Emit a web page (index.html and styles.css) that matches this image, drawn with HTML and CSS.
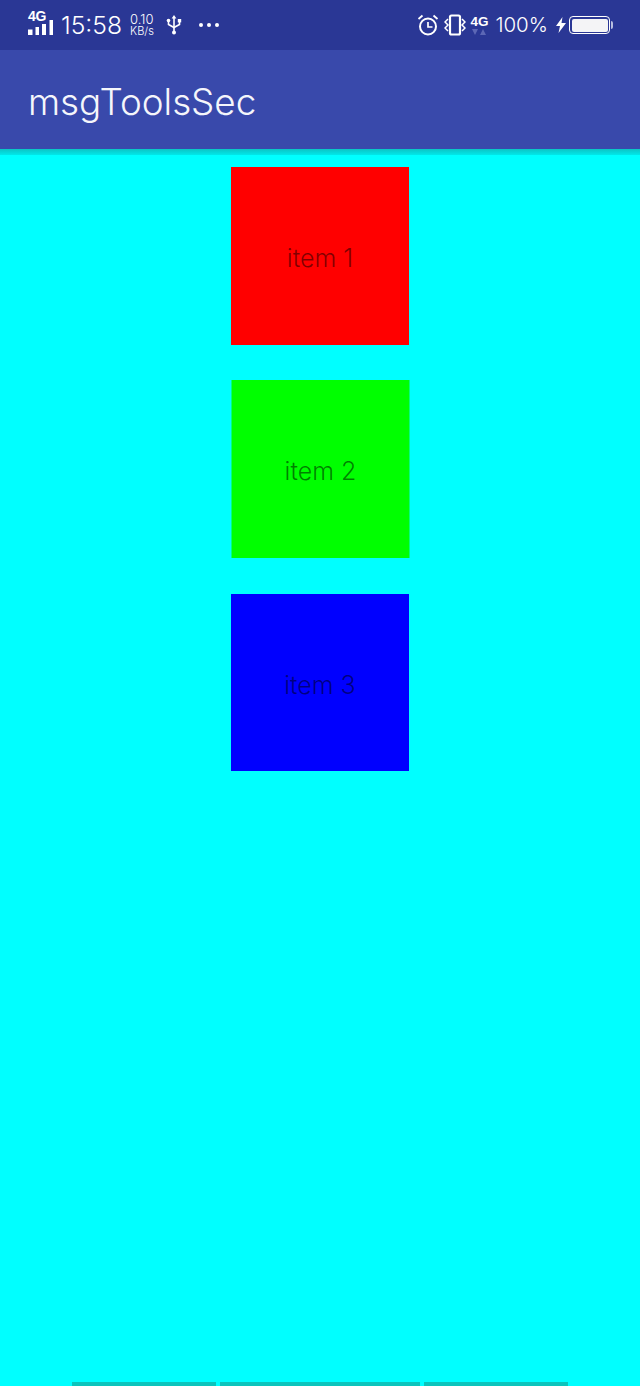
FILE: index.html
```html
<!DOCTYPE html>
<html lang="en">
<head>
<meta charset="utf-8">
<title>msgToolsSec</title>
<link rel="stylesheet" href="styles.css">
</head>
<body>
<div class="page">
  <header class="header">
    <div class="status">
      <div class="status-group">
        <div class="signal">
          <span class="signal-label">4G</span>
          <svg class="signal-bars" width="26" height="15" viewBox="0 0 26 15"><g fill="#fff"><rect x="0" y="9.500" width="4.500" height="5.500"/><rect x="7.500" y="7" width="3.500" height="8"/><rect x="14" y="4" width="4" height="11"/><rect x="21.500" y="0" width="3.500" height="15"/></g></svg>
        </div>
        <span class="time">15:58</span>
        <div class="speed"><span>0.10</span><span class="speed-unit">KB/s</span></div>
        <svg class="usb" width="16" height="20" viewBox="0 0 16 20"><g fill="none" stroke="#fff" stroke-width="1.600"><path d="M8 2v16"/><path d="M2.500 6v3.500L8 12.500l5.500-3V6"/></g><g fill="#fff"><path d="M8 0l2.400 3.500H5.600z"/><circle cx="2.500" cy="5.500" r="1.800"/><rect x="11.800" y="4" width="3.400" height="3.400"/><circle cx="8" cy="17.500" r="2"/></g></svg>
        <div class="dots"><i></i><i></i><i></i></div>
      </div>
      <div class="status-group right">
        <svg class="alarm" width="22" height="22" viewBox="0 0 22 22"><g fill="none" stroke="#fff" stroke-width="2"><circle cx="11" cy="12.500" r="8"/><path d="M11 8v5h4.500" stroke-width="1.700"/><path d="M1.500 5L5.500 1.500M20.500 5l-4-3.500" stroke-width="1.800"/></g></svg>
        <svg class="vibrate" width="22" height="22" viewBox="0 0 22 22"><rect x="6" y="1.500" width="10" height="19" rx="1.500" fill="none" stroke="#fff" stroke-width="2.200"/><path d="M4 5L1 8l3 3-3 3 3 3M18 5l3 3-3 3 3 3-3 3" fill="none" stroke="#fff" stroke-width="1.500"/></svg>
        <div class="net">
          <span class="net-label">4G</span>
          <svg width="14" height="6" viewBox="0 0 14 6"><path d="M0 0h6L3 6zM8 6l3-6 3 6z" fill="#5c67b5"/></svg>
        </div>
        <span class="battery-text">100%</span>
        <svg class="bolt" width="10" height="16" viewBox="0 0 10 16"><path d="M6.500 0L0 9h4l-1.500 7L10 6H5.500z" fill="#fff"/></svg>
        <div class="battery"><div class="battery-fill"></div></div>
      </div>
    </div>
    <div class="toolbar">msgToolsSec</div>
    <div class="shadow"></div>
  </header>
  <main class="list">
    <div class="item item-red">item 1</div>
    <div class="item item-green">item 2</div>
    <div class="item item-blue">item 3</div>
  </main>
  <div class="tabs">
    <span class="tab tab-a"></span>
    <span class="tab tab-b"></span>
    <span class="tab tab-a"></span>
  </div>
</div>
</body>
</html>
```

FILE: styles.css
```css
html, body {
  margin: 0;
  padding: 0;
}

body {
  background: #00ffff;
  font-family: Inter, "Liberation Sans", sans-serif;
}

.page {
  height: 1386px;
  display: flex;
  flex-direction: column;
  overflow: hidden;
}

.header {
  flex: none;
}

.status {
  height: 50px;
  box-sizing: border-box;
  padding: 0 30px 0 28px;
  background: #2a3795;
  color: #fff;
  display: flex;
  justify-content: space-between;
  align-items: center;
}

.status-group {
  display: flex;
  align-items: center;
}

.signal {
  width: 26px;
  height: 22px;
  position: relative;
}

.signal-label {
  position: absolute;
  left: 0;
  top: -5px;
  font: 700 14px/15px "Liberation Sans", sans-serif;
  letter-spacing: -0.300px;
}

.signal-bars {
  position: absolute;
  left: 0;
  top: 6px;
}

.time {
  margin-left: 7px;
  font-size: 24.700px;
  font-weight: 300;
  line-height: 28px;
}

.speed {
  margin-left: 8px;
  width: 36px;
  display: flex;
  flex-direction: column;
  font-size: 13px;
  line-height: 12.500px;
  font-weight: 300;
}

.speed-unit {
  font-size: 11px;
}

.dots {
  margin-left: 17px;
  display: flex;
  gap: 4px;
}

.dots i {
  width: 4px;
  height: 4px;
  border-radius: 50%;
  background: #fff;
}

.alarm {
  margin-right: 5px;
}

.vibrate {
  margin-right: 2px;
}

.net {
  width: 22px;
  display: flex;
  flex-direction: column;
  align-items: center;
  gap: 1px;
  margin-right: 5px;
}

.net-label {
  font: 700 13.500px/13px "Liberation Sans", sans-serif;
}

.battery-text {
  font-size: 20.500px;
  font-weight: 300;
  line-height: 26px;
}

.bolt {
  margin-left: 8px;
}

.battery {
  margin-left: 3px;
  width: 41px;
  height: 18px;
  box-sizing: border-box;
  border: 1.500px solid #fff;
  border-radius: 4px;
  padding: 1.500px;
  position: relative;
}

.battery::after {
  content: "";
  position: absolute;
  right: -3.500px;
  top: 3.500px;
  width: 2px;
  height: 8px;
  background: #b9bfe0;
  border-radius: 0 2px 2px 0;
}

.battery-fill {
  height: 100%;
  background: #f4f4f6;
  border-radius: 2px;
}

.toolbar {
  height: 99px;
  box-sizing: border-box;
  padding-left: 28px;
  background: #3949ab;
  color: #f5f6fb;
  font-size: 36.800px;
  font-weight: 300;
  line-height: 104px;
}

.shadow {
  height: 6px;
  background: linear-gradient(#0bc4c4, #00e8ea);
}

.list {
  flex: 1;
  display: flex;
  flex-direction: column;
  align-items: center;
  padding-top: 12px;
}

.item {
  width: 178px;
  height: 178px;
  flex: none;
  box-sizing: border-box;
  padding-top: 3px;
  display: flex;
  align-items: center;
  justify-content: center;
  color: rgba(0, 0, 0, 0.5);
  font-size: 25px;
  font-weight: 300;
}

.item-red {
  background: #ff0000;
}

.item-green {
  background: #00ff00;
  margin-top: 35px;
  transform: translateX(0.5px);
}

.item-blue {
  background: #0000ff;
  margin-top: 36px;
  height: 177px;
  padding-top: 4px;
}

.tabs {
  flex: none;
  height: 4px;
  padding-left: 72px;
  display: flex;
  gap: 4px;
}

.tab {
  background: #0cc4bc;
}

.tab-a {
  width: 144px;
}

.tab-b {
  width: 200px;
}
```
